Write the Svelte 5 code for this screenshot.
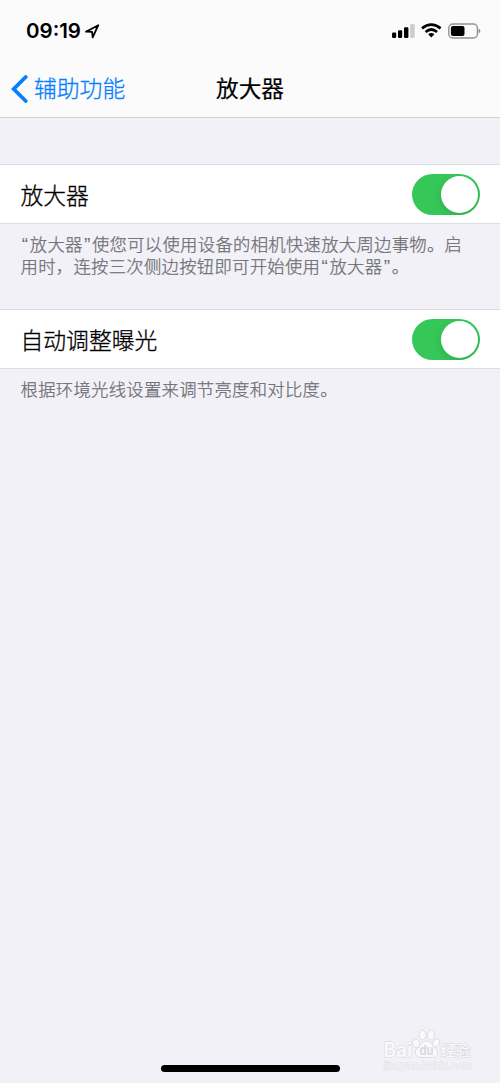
<script>
  const groups = [
    { label: '放大器', lines: ['“放大器”使您可以使用设备的相机快速放大周边事物。启', '用时，连按三次侧边按钮即可开始使用“放大器”。'] },
    { label: '自动调整曝光', lines: ['根据环境光线设置来调节亮度和对比度。'] }
  ];
  let enabled = $state([true, true]);
</script>

<div class="screen">
  <header>
    <div class="status">
      <div class="clock">
        <span class="time">09:19</span>
        <svg width="15" height="15" viewBox="0 0 15 15"><path d="M1 7.7 13.3 1.2 7.7 13.4 7.1 7.9Z" fill="none" stroke="#000" stroke-width="1.8" stroke-linejoin="round" /></svg>
      </div>
      <svg class="indicators" width="90" height="18" viewBox="0 0 90 18">
        <rect x="1" y="10.5" width="4.2" height="5.5" rx="1.2" />
        <rect x="7" y="8.3" width="4.2" height="7.7" rx="1.2" />
        <rect x="13" y="5.2" width="4.4" height="10.8" rx="1.2" />
        <rect x="19.2" y="2" width="4.4" height="14" rx="1.2" fill="#ccc" />
        <g fill="none" stroke="#000" stroke-width="2.7">
          <path d="M31 6.4Q40.3 -1.1 49.6 6.4" />
          <path d="M34.6 10Q40.3 5 46 10" />
        </g>
        <path d="M37.2 12.3Q40.3 9.8 43.4 12.3L40.3 15.6Z" />
        <rect x="57.8" y="2" width="28.6" height="14" rx="4" fill="none" stroke="#929292" stroke-width="1.4" />
        <rect x="59.9" y="4.1" width="13.6" height="9.8" rx="2" />
        <path d="M87.6 6.5Q91.2 9 87.6 11.4Z" fill="#888" />
      </svg>
    </div>
    <nav>
      <a href="#back" class="back">
        <svg width="18" height="28" viewBox="0 0 18 28"><path d="M15.7 2 3.7 14 15.7 26" fill="none" stroke="#087eff" stroke-width="3.8" stroke-linecap="round" stroke-linejoin="miter" /></svg>
        <span>辅助功能</span>
      </a>
      <h1>放大器</h1>
    </nav>
  </header>

  <main>
    {#each groups as group, i}
      <section>
        <div class="row">
          <span>{group.label}</span>
          <button class="switch" class:on={enabled[i]} role="switch" aria-checked={enabled[i]} aria-label={group.label} onclick={() => (enabled[i] = !enabled[i])}><i></i></button>
        </div>
        <p>{#each group.lines as line}<span>{#each line.split(/([“”])/) as part}{#if part === '“' || part === '”'}<b>{part}</b>{:else}{part}{/if}{/each}</span>{/each}</p>
      </section>
    {/each}
  </main>

  <svg class="watermark" width="94" height="48" viewBox="0 0 94 48">
    <g fill="#fafafc" stroke="#d9d9de" stroke-width=".9">
      <ellipse cx="34" cy="16.3" rx="3.3" ry="4.4" transform="rotate(-15 34 16.3)" />
      <ellipse cx="40.5" cy="8" rx="3.5" ry="4.9" />
      <ellipse cx="49" cy="8" rx="3.5" ry="4.9" transform="rotate(8 49 8)" />
      <ellipse cx="54.2" cy="16" rx="3.3" ry="4.4" transform="rotate(20 54.2 16)" />
      <path d="M44.5 14C40 14 39 18.6 35.6 21.2C31.5 25 33.5 30.5 39 30.5H50C56 30.5 57.5 25.2 53.5 21.4C50.5 18.6 49 14 44.5 14Z" />
    </g>
    <g class="mark">
      <text x="1.5" y="29.5" font-size="19.5" font-weight="600" textLength="28.5" lengthAdjust="spacingAndGlyphs">Bai</text>
      <text x="37.5" y="28" font-size="13" class="du" textLength="14" lengthAdjust="spacingAndGlyphs">du</text>
      <text x="58.5" y="28.7" font-size="15" font-weight="500" class="cn">经验</text>
      <text x="2" y="42" font-size="10" class="url" textLength="88" lengthAdjust="spacingAndGlyphs">jingyan.baidu.com</text>
    </g>
  </svg>
  <div class="home"></div>
</div>

<style>
  :global(body) { background: #f2f1f7; }
  .screen {
    position: relative;
    box-sizing: border-box;
    height: 1083px;
    overflow: hidden;
    background: #f2f1f7;
    color: #000;
    font-family: Inter, "Noto Sans CJK SC", sans-serif;
    font-weight: 300;
  }
  header {
    box-sizing: border-box;
    height: 118px;
    background: #fbfbfc;
    border-bottom: 1px solid #cfced3;
  }
  .status {
    box-sizing: border-box;
    height: 60px;
    padding: 21px 19px 0 26px;
    display: flex;
    justify-content: space-between;
    align-items: flex-start;
  }
  .clock { display: flex; align-items: center; gap: 4px; height: 20px; }
  .time { font-size: 20.5px; font-weight: 600; line-height: 20px; }
  .indicators { margin-top: 1px; }
  nav {
    height: 57px;
    display: grid;
    grid-template-columns: 1fr auto 1fr;
    align-items: center;
    padding: 0 10px;
  }
  .back {
    display: flex;
    align-items: center;
    gap: 6px;
    color: #087eff;
    text-decoration: none;
    font-size: 22.8px;
    line-height: 32px;
    -webkit-text-stroke: .3px;
  }
  h1 { margin: 0; font-size: 22.7px; line-height: 32px; font-weight: 400; -webkit-text-stroke: .2px; }
  main { padding-top: 46px; }
  .row {
    box-sizing: border-box;
    height: 60px;
    padding: 0 20px 0 20.5px;
    display: flex;
    align-items: center;
    justify-content: space-between;
    background: #fff;
    border-top: 1px solid #dddce1;
    border-bottom: 1px solid #dddce1;
    font-size: 22.8px;
    -webkit-text-stroke: .3px;
  }
  .row span { padding-top: 1px; }
  .switch {
    width: 68px;
    height: 41px;
    padding: 2px;
    border: 0;
    border-radius: 21px;
    display: flex;
    overflow: hidden;
    background: #ddd;
  }
  .switch.on { justify-content: flex-end; background: #36c759; }
  .switch i {
    width: 37px;
    height: 37px;
    border-radius: 50%;
    background: #fff;
    box-shadow: 0 3px 8px #0002;
  }
  p {
    margin: 0;
    padding: 10px 20px 0 20.5px;
    height: 75px;
    color: #6d6d72;
    font-size: 17.33px;
    letter-spacing: .3px;
    line-height: 22px;
    -webkit-text-stroke: .25px;
  }
  p span { display: block; white-space: nowrap; }
  p b {
    display: inline-block;
    width: 9.3px;
    text-align: center;
    font-family: "Liberation Sans", sans-serif;
    font-size: 19px;
    font-weight: 400;
    line-height: 1;
    -webkit-text-stroke: 0;
  }
  .watermark { position: absolute; left: 382px; top: 1027px; }
  .mark { fill: #fafafc; stroke: #d6d6db; stroke-width: 1px; paint-order: stroke; }
  .du { fill: #d9d9de; stroke: none; font-weight: 700; }
  .cn { font-family: "Noto Sans CJK SC", sans-serif; }
  .url { fill: #f7f7fa; font-weight: 400; stroke-width: .9px; stroke: #dedee3; }
  .home {
    position: absolute;
    left: 161px;
    top: 1065px;
    width: 179px;
    height: 7px;
    border-radius: 4px;
    background: #000;
  }
</style>
